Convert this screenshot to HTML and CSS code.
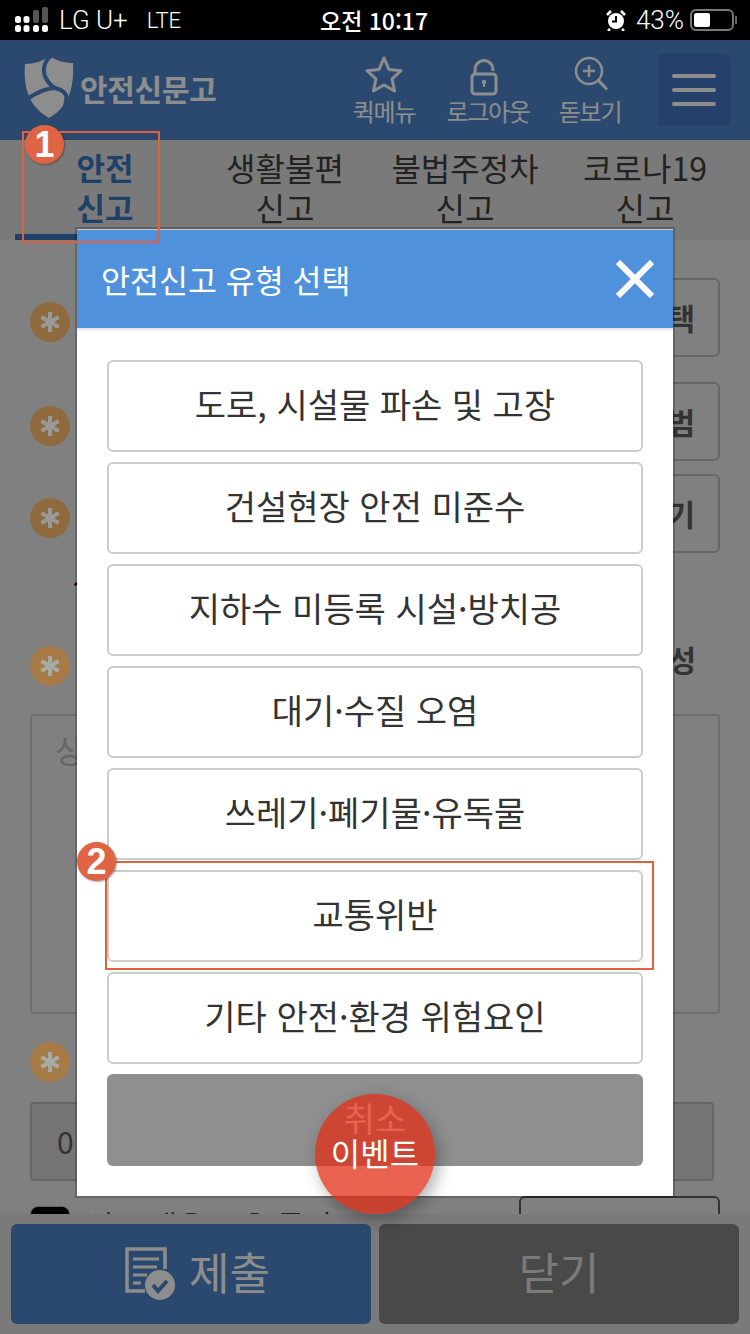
FILE: index.html
```html
<!DOCTYPE html>
<html lang="ko">
<head>
    <meta charset="UTF-8">
    <meta name="viewport" content="width=device-width, initial-scale=1.0">
    <title>안전신문고</title>
    <link rel="stylesheet" href="styles.css">
</head>
<body>
    <div class="statusbar">
        <div class="status-left">
            <svg class="signal" width="34" height="26" viewBox="0 0 34 26">
                <g fill="#fff">
                    <rect x="0" y="9" width="6" height="7" rx="2.5"/>
                    <rect x="8.500" y="9" width="6" height="7" rx="2.5"/>
                    <rect x="0" y="18" width="6" height="7" rx="2.5"/>
                    <rect x="8.500" y="18" width="6" height="7" rx="2.500"/>
                    <rect x="18" y="18" width="6" height="7" rx="2.500"/>
                    <rect x="27" y="18" width="6" height="7" rx="2.500"/>
                </g>
                <rect x="18" y="3" width="6" height="13" rx="2" fill="#555"/>
                <rect x="27" y="0" width="6" height="16" rx="2" fill="#555"/>
            </svg>
            <span>LG U+</span>
            <span class="lte">LTE</span>
        </div>
        <div class="status-time">오전 10:17</div>
        <div class="status-right">
            <svg width="20" height="22" viewBox="0 0 20 22">
                <circle cx="10" cy="12" r="8" fill="#fff"/>
                <path d="M10 7v5.500H6" fill="none" stroke="#000" stroke-width="2"/>
                <path d="M1 6l4-4M19 6l-4-4M4 20l-2 2M16 20l2 2" stroke="#fff" stroke-width="2.500"/>
            </svg>
            <span class="percent">43%</span>
            <div class="battery"><div class="battery-fill"></div></div>
            <div class="battery-tip"></div>
        </div>
    </div>

    <header class="topbar">
        <div class="logo">
            <svg width="50" height="64" viewBox="0 0 50 64">
                <path d="M26 1C20 6 9 9 1 9c-1 18 0 40 24 54C48 50 50 26 49 8 41 8 33 6 26 1z" fill="#ebebeb"/>
                <path d="M27 1C19 7 18 18 23 25c2 4 5 6 8 8M31 33C21 33 12 38 3 44M31 33c5 1 9 3 11 7 1 5 0 10-3 16" fill="none" stroke="#487bb7" stroke-width="4"/>
            </svg>
            <span class="logo-text">안전신문고</span>
        </div>
        <nav class="top-actions">
            <a class="top-action action-menu">
                <svg width="38" height="38" viewBox="0 0 38 38">
                    <path d="M19 3l5 11.500 12 1.200-9 8.300 2.600 12L19 30l-10.600 6L11 24l-9-8.300 12-1.200z" fill="none" stroke="#ebebeb" stroke-width="3" stroke-linejoin="round"/>
                </svg>
                <span>퀵메뉴</span>
            </a>
            <a class="top-action action-lock">
                <svg width="28" height="36" viewBox="0 0 28 36">
                    <path d="M5 13V9.500a9 9 0 0 1 18 0V11" fill="none" stroke="#ebebeb" stroke-width="3"/>
                    <rect x="2" y="14" width="24" height="20" rx="3" fill="none" stroke="#ebebeb" stroke-width="3"/>
                    <circle cx="14" cy="22" r="2.200" fill="#ebebeb"/>
                    <path d="M14 22v5" stroke="#ebebeb" stroke-width="2"/>
                </svg>
                <span>로그아웃</span>
            </a>
            <a class="top-action action-zoom">
                <svg width="36" height="36" viewBox="0 0 36 36">
                    <circle cx="15" cy="15" r="13" fill="none" stroke="#ebebeb" stroke-width="2.500"/>
                    <path d="M15 9v12M9 15h12" stroke="#ebebeb" stroke-width="2.500"/>
                    <path d="M24.500 24.500L33 33.500" stroke="#ebebeb" stroke-width="3"/>
                </svg>
                <span>돋보기</span>
            </a>
            <button class="menu-btn"><i></i><i></i><i></i></button>
        </nav>
    </header>

    <div class="tabs">
        <div class="tab active">안전<br>신고</div>
        <div class="tab">생활불편<br>신고</div>
        <div class="tab">불법주정차<br>신고</div>
        <div class="tab">코로나19<br>신고</div>
    </div>

    <main class="form">
        <div class="form-row row-first">
            <svg class="required" width="40" height="40" viewBox="0 0 40 40">
                <circle cx="20" cy="20" r="20" fill="#eeb169"/>
                <path d="M20 10v20M11.300 15l17.400 10M28.700 15l-17.400 10" stroke="#fff" stroke-width="4"/>
            </svg>
            <div class="pick">신고 유형 선택</div>
        </div>
        <div class="form-row row-second">
            <svg class="required" width="40" height="40" viewBox="0 0 40 40">
                <circle cx="20" cy="20" r="20" fill="#eeb169"/>
                <path d="M20 10v20M11.300 15l17.400 10M28.700 15l-17.400 10" stroke="#fff" stroke-width="4"/>
            </svg>
            <div class="pick">사진 첨부 범</div>
        </div>
        <div class="form-row row-third">
            <svg class="required" width="40" height="40" viewBox="0 0 40 40">
                <circle cx="20" cy="20" r="20" fill="#eeb169"/>
                <path d="M20 10v20M11.300 15l17.400 10M28.700 15l-17.400 10" stroke="#fff" stroke-width="4"/>
            </svg>
            <div class="pick">위치 찾기</div>
        </div>
        <div class="location">신고 발생지역</div>
        <div class="form-row label-row">
            <svg class="required-plain" width="40" height="40" viewBox="0 0 40 40">
                <circle cx="20" cy="20" r="20" fill="#a67b45"/>
                <path d="M20 10v20M11.300 15l17.400 10M28.700 15l-17.400 10" stroke="#a8a8a8" stroke-width="4"/>
            </svg>
            <div class="label">내용 작성</div>
        </div>
        <div class="textarea">상세 내용을 입력해 주세요</div>
        <div class="form-row phone-label">
            <svg class="required-plain" width="40" height="40" viewBox="0 0 40 40">
                <circle cx="20" cy="20" r="20" fill="#a67b45"/>
                <path d="M20 10v20M11.300 15l17.400 10M28.700 15l-17.400 10" stroke="#a8a8a8" stroke-width="4"/>
            </svg>
        </div>
        <div class="input">010</div>
        <div class="agree">
            <span class="checkbox"></span>
            <span class="agree-text">신고 내용 공유 동의</span>
            <span class="agree-btn"></span>
        </div>
    </main>

    <div class="bottombar">
        <button class="bottom-btn submit">
            <svg width="52" height="54" viewBox="0 0 52 54">
                <path d="M20 44H2V2h38v20" fill="none" stroke="#ebebeb" stroke-width="3.500"/>
                <path d="M8 12h26M8 20h24M8 28h14M8 36h8" stroke="#ebebeb" stroke-width="3"/>
                <circle cx="35" cy="38" r="15" fill="#ebebeb"/>
                <path d="M28 38l5 6 9-10" fill="none" stroke="#487bb7" stroke-width="4"/>
            </svg>
            <span>제출</span>
        </button>
        <button class="bottom-btn close"><span>닫기</span></button>
    </div>

    <div class="dim"></div>

    <div class="modal">
        <div class="modal-head">
            <span>안전신고 유형 선택</span>
            <svg width="38" height="38" viewBox="0 0 38 38">
                <path d="M2 2l34 34M36 2L2 36" stroke="#fff" stroke-width="6"/>
            </svg>
        </div>
        <div class="modal-body">
            <button class="type-btn">도로, 시설물 파손 및 고장</button>
            <button class="type-btn">건설현장 안전 미준수</button>
            <button class="type-btn">지하수 미등록 시설·방치공</button>
            <button class="type-btn">대기·수질 오염</button>
            <button class="type-btn">쓰레기·폐기물·유독물</button>
            <button class="type-btn">교통위반</button>
            <button class="type-btn">기타 안전·환경 위험요인</button>
            <button class="type-btn cancel">취소</button>
        </div>
    </div>

    <div class="mark mark-tab"></div>
    <div class="badge badge-tab">1</div>
    <div class="mark mark-type"></div>
    <div class="badge badge-type">2</div>
    <div class="event">이벤트</div>
</body>
</html>
```

FILE: styles.css
```css
* {
    box-sizing: border-box;
}
body {
    font-family: "Noto Sans CJK KR", "Noto Sans", sans-serif;
    margin: 0;
    width: 750px;
    height: 1334px;
    overflow: hidden;
    display: flex;
    flex-direction: column;
    background: #d5d5d5;
    position: relative;
}
button {
    font-family: inherit;
}

/* status bar */
.statusbar {
    height: 40px;
    background: #000;
    color: #fff;
    display: flex;
    align-items: center;
    position: relative;
    z-index: 5;
    padding: 0 13px 0 15px;
    font-family: Roboto, "Liberation Sans", sans-serif;
    font-weight: 300;
    font-size: 26px;
}
.status-left {
    width: 305px;
    display: flex;
    align-items: center;
}
.signal {
    margin-right: 10px;
}
.lte {
    margin-left: 19px;
    font-size: 22px;
}
.status-time {
    font-family: "Noto Sans CJK KR", sans-serif;
    font-size: 23px;
    font-weight: 500;
    width: 108px;
    white-space: nowrap;
}
.status-right {
    margin-left: auto;
    display: flex;
    align-items: center;
}
.percent {
    margin-left: 10px;
    font-size: 26px;
}
.battery {
    width: 44px;
    height: 22px;
    border: 2px solid #777;
    border-radius: 6px;
    margin-left: 6px;
    padding: 2px;
}
.battery-fill {
    width: 16px;
    height: 100%;
    background: #fff;
    border-radius: 2px;
}
.battery-tip {
    width: 2px;
    height: 8px;
    background: #666;
    margin-left: 1px;
}

/* header */
.topbar {
    height: 100px;
    background: #487bb7;
    display: flex;
    padding: 14px 20px 0 24px;
}
.logo {
    display: flex;
    height: 64px;
    align-items: center;
}
.logo-text {
    color: #ebebeb;
    font-size: 30px;
    font-weight: 700;
    letter-spacing: -0.300px;
    margin-left: 6px;
    margin-top: 4px;
}
.logo svg {
    margin-top: 2px;
}
.top-actions {
    margin-left: auto;
    display: flex;
}
.top-action {
    display: flex;
    flex-direction: column;
    align-items: center;
    color: #ebebeb;
    font-size: 24px;
    letter-spacing: -1.300px;
    line-height: 30px;
    width: 90px;
}
.top-action svg {
    height: 40px;
    margin-bottom: 2px;
}
.action-menu {
    margin-right: 14px;
}
.action-lock {
    margin-right: 12px;
}
.action-lock svg {
    margin-top: 4px;
    margin-bottom: -2px;
    margin-left: -8px;
}
.action-zoom {
    margin-right: 23px;
}
.action-zoom svg {
    margin-left: 3px;
}
.menu-btn {
    width: 72px;
    height: 72px;
    background: #3e6cb1;
    border: none;
    border-radius: 4px;
    display: flex;
    flex-direction: column;
    justify-content: center;
    align-items: center;
    gap: 10px;
    padding: 0;
}
.menu-btn i {
    width: 44px;
    height: 4px;
    border-radius: 2px;
    background: #ebebeb;
}

/* tabs */
.tabs {
    height: 100px;
    background: #cbcbcb;
    display: flex;
    padding: 0 15px;
}
.tab {
    width: 180px;
    text-align: center;
    font-size: 32px;
    line-height: 40px;
    color: #393939;
    padding-top: 7px;
}
.tab.active {
    color: #346bad;
    font-weight: 700;
    border-bottom: 6px solid #346bad;
    font-size: 31px;
}

/* form behind the popup */
.form {
    flex: 1;
    min-height: 0;
    overflow: hidden;
    padding: 38px 30px 0;
}
.form-row {
    display: flex;
    align-items: center;
}
.row-first, .row-second, .row-third {
    height: 79px;
}
.row-second {
    margin-top: 25px;
}
.row-third {
    margin-top: 13px;
}
.required {
    flex-shrink: 0;
    margin-top: 9px;
}
.required-plain {
    flex-shrink: 0;
    position: relative;
    z-index: 1;
}
.pick {
    flex: 1;
    height: 79px;
    margin-left: 30px;
    border: 2px solid #aaa;
    border-radius: 6px;
    font-size: 30px;
    font-weight: 700;
    color: #555;
    text-align: right;
    line-height: 75px;
    padding-right: 23px;
}
.location {
    margin-top: 8px;
    margin-left: 42px;
    font-size: 30px;
    line-height: 40px;
    color: #000;
}
.label-row {
    margin-top: 45px;
}
.label {
    flex: 1;
    font-size: 30px;
    font-weight: 700;
    color: #555;
    text-align: right;
    padding-right: 24px;
    margin-top: -14px;
}
.textarea {
    margin-top: 28px;
    height: 300px;
    border: 2px solid #b8b8b8;
    border-radius: 4px;
    padding: 10px 23px;
    font-size: 32px;
    color: #aaa;
}
.phone-label {
    margin-top: 28px;
}
.input {
    margin-top: 20px;
    width: 684px;
    height: 79px;
    background: #c3c3c3;
    border: 2px solid #aaa;
    border-radius: 4px;
    padding-left: 25px;
    font-size: 30px;
    letter-spacing: 5px;
    line-height: 75px;
    color: #555;
}
.agree {
    margin-top: 15px;
    display: flex;
    align-items: flex-start;
}
.checkbox {
    width: 40px;
    height: 40px;
    background: #000;
    border: 1px solid #aaa;
    border-radius: 8px;
    margin-top: 10px;
}
.agree-text {
    margin-left: 16px;
    font-size: 30px;
    margin-top: 6px;
    color: #393939;
}
.agree-btn {
    margin-left: auto;
    width: 201px;
    height: 80px;
    border: 2px solid #555;
    border-radius: 6px;
}

/* bottom buttons */
.bottombar {
    height: 120px;
    background: #cbcbcb;
    display: flex;
    gap: 8px;
    padding: 10px 11px;
    position: absolute;
    left: 0;
    right: 0;
    bottom: 0;
}
.bottom-btn {
    flex: 1 1 0;
    border: none;
    border-radius: 6px;
    color: #ebebeb;
    font-size: 44px;
    display: flex;
    justify-content: center;
    align-items: center;
    padding: 0 0 6px;
}
.submit {
    background: #487bb7;
}
.submit svg {
    margin-left: 13px;
    margin-right: 12px;
    margin-top: 6px;
}
.close {
    background: #7b7b7b;
    color: #cbcbcb;
}

/* popup */
.dim {
    position: absolute;
    inset: 0;
    background: rgba(0, 0, 0, 0.4);
}
.modal {
    position: absolute;
    left: 77px;
    top: 229px;
    width: 596px;
    background: #fff;
    box-shadow: 0 0 0 2px rgba(0, 0, 0, 0.2);
}
.modal-head {
    height: 101px;
    background: #4f92db;
    border-top: 1px solid #c9c9c9;
    border-bottom: 2px solid #e4e6ea;
    color: #fff;
    font-size: 31.500px;
    display: flex;
    align-items: center;
    justify-content: space-between;
    padding: 0 19px 1px 24px;
}
.modal-head svg {
    margin-top: 1px;
}
.modal-body {
    padding: 30px;
    display: flex;
    flex-direction: column;
    gap: 10px;
}
.type-btn {
    height: 92px;
    background: #fff;
    border: 2px solid #ccc;
    border-radius: 6px;
    color: #333;
    font-size: 34px;
    padding: 0 0 6px;
}
.cancel {
    background: #8f8f8f;
    border: none;
    color: #fff;
}

/* annotations on top of the screenshot */
.mark {
    position: absolute;
    border: 2px solid #e0603f;
}
.mark-tab {
    left: 22px;
    top: 131px;
    width: 138px;
    height: 112px;
}
.mark-type {
    left: 105px;
    top: 861px;
    width: 549px;
    height: 109px;
}
.badge {
    position: absolute;
    width: 39px;
    height: 39px;
    border-radius: 50%;
    background: #df6443;
    color: #fff;
    font-family: "Liberation Sans", sans-serif;
    font-weight: 700;
    font-size: 36px;
    line-height: 39px;
    text-align: center;
    box-shadow: 1px 1px 2px rgba(0, 0, 0, 0.35);
}
.badge-tab {
    left: 25px;
    top: 125px;
}
.badge-type {
    left: 77px;
    top: 842px;
}
.event {
    position: absolute;
    left: 315px;
    top: 1094px;
    width: 120px;
    height: 120px;
    border-radius: 50%;
    background: rgba(224, 45, 20, 0.75);
    box-shadow: 4px 6px 16px rgba(0, 0, 0, 0.3);
    color: #fff;
    font-size: 32px;
    line-height: 116px;
    text-align: center;
}
```
